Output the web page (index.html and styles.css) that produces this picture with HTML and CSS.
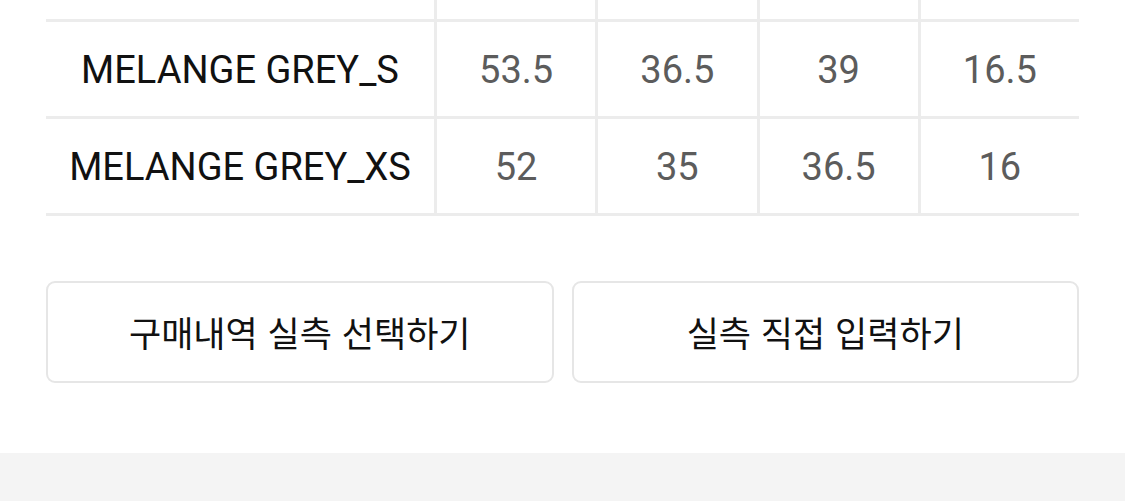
FILE: index.html
```html
<!DOCTYPE html>
<html lang="ko">
<head>
<meta charset="utf-8">
<link rel="stylesheet" href="styles.css">
</head>
<body>
<div class="page">
  <section class="size-section">
    <div class="size-table">
      <div class="cell label stub"></div>
      <div class="cell value stub"></div>
      <div class="cell value stub"></div>
      <div class="cell value stub"></div>
      <div class="cell value stub"></div>

      <div class="cell label">MELANGE GREY_S</div>
      <div class="cell value">53.5</div>
      <div class="cell value">36.5</div>
      <div class="cell value">39</div>
      <div class="cell value">16.5</div>

      <div class="cell label">MELANGE GREY_XS</div>
      <div class="cell value">52</div>
      <div class="cell value">35</div>
      <div class="cell value">36.5</div>
      <div class="cell value">16</div>
    </div>

    <div class="actions">
      <button class="action-btn">구매내역 실측 선택하기</button>
      <button class="action-btn">실측 직접 입력하기</button>
    </div>
  </section>
  <div class="footer-band"></div>
</div>
</body>
</html>
```

FILE: styles.css
```css
* { box-sizing: border-box; }

html, body {
  margin: 0;
  padding: 0;
  background: #ffffff;
}

body {
  font-family: Roboto, "Noto Sans CJK KR", sans-serif;
  color: #111111;
}

.page {
  width: 1125px;
  height: 501px;
  overflow: hidden;
  display: flex;
  flex-direction: column;
}

.size-section {
  padding: 0 46px 70px 46px;
}

.size-table {
  display: grid;
  grid-template-columns: 388px repeat(4, 1fr);
}

.cell {
  height: 97px;
  border-bottom: 3px solid #ececec;
  display: flex;
  align-items: center;
  justify-content: center;
  font-size: 38px;
  line-height: 1;
}

.cell.stub {
  height: 22px;
}

.label {
  color: #111111;
  padding-top: 2px;
}

.value {
  border-left: 3px solid #ececec;
  color: #5c5c5c;
  padding-top: 2px;
}

.actions {
  display: flex;
  gap: 18px;
  margin-top: 65px;
}

.action-btn {
  flex: 1;
  height: 102px;
  background: #ffffff;
  border: 2px solid #e6e6e6;
  border-radius: 9px;
  font-family: "Noto Sans CJK KR", sans-serif;
  font-size: 35px;
  font-weight: 400;
  color: #111111;
  padding: 0 0 2px 0;
}

.footer-band {
  flex: 1;
  background: #f4f4f4;
}
```
